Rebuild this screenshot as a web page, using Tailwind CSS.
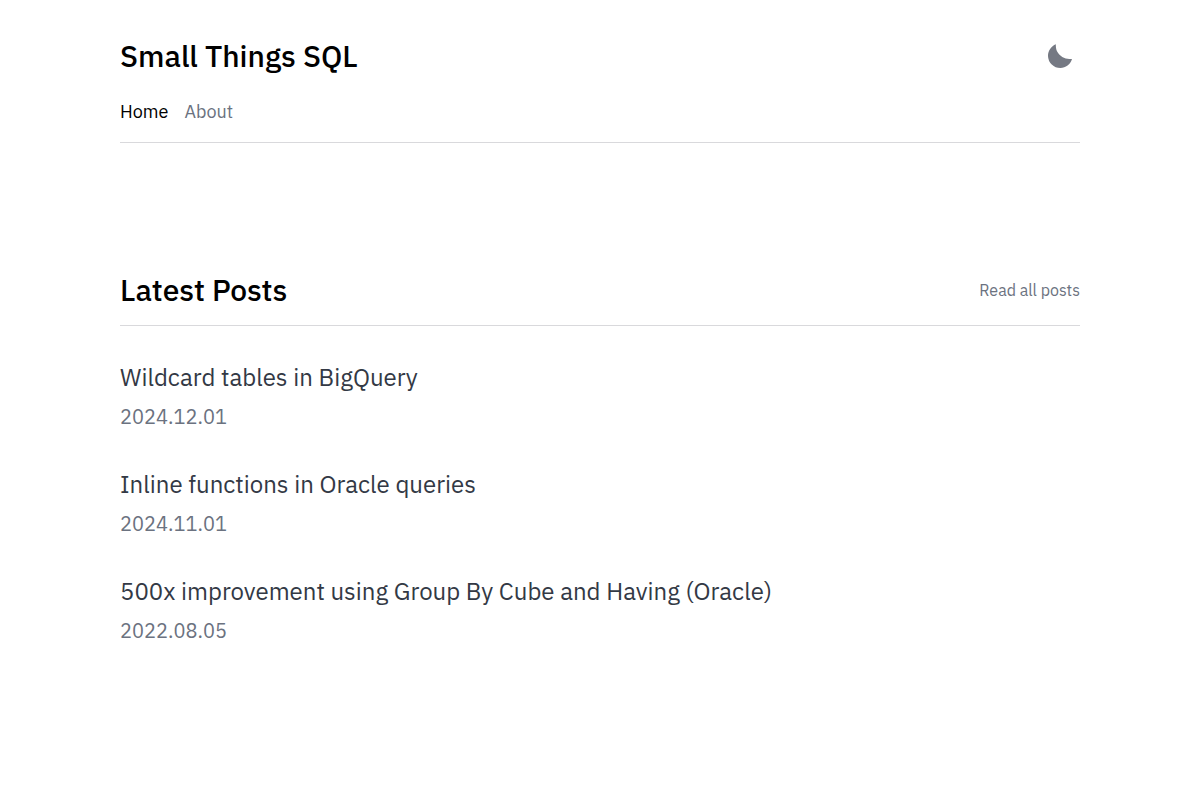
<!DOCTYPE html>
<html lang="en">
<head>
  <meta charset="UTF-8" />
  <meta name="viewport" content="width=device-width, initial-scale=1.0">
  <title>Small Things SQL</title>
  <script src="https://cdn.jsdelivr.net/npm/@tailwindcss/browser@4"></script>
</head>
<body class="bg-white text-black font-['IBM_Plex_Sans',Roboto,sans-serif]">

  <div class="max-w-5xl mx-auto px-8">

    <!-- Header -->
    <header class="border-b border-[#d9d9dc] pt-8 pb-3.5">
      <div class="flex items-center justify-between">
        <a href="#" class="text-3xl leading-12 font-medium">Small Things SQL</a>
        <button type="button" id="themeToggle" aria-label="Toggle dark mode" class="p-2 text-[#757983]">
          <svg class="w-6 h-6" viewBox="32 32 448 448" fill="currentColor">
            <path d="M264 480A232 232 0 0132 254C32 160 90 72 179 36C176 72 179 108 190 144C204 184 232 220 269 249C306 280 350 300 398 308C426 313 453 314 480 312C450 412 362 480 264 480z" />
          </svg>
        </button>
      </div>
      <nav class="flex gap-4 mt-4 text-lg leading-8">
        <a href="#" class="text-black">Home</a>
        <a href="#about" class="text-[#6b7280] hover:text-black">About</a>
      </nav>
    </header>

    <!-- Latest posts -->
    <main class="pt-32">
      <div class="flex items-center justify-between border-b border-[#d9d9dc] pb-4">
        <h1 class="text-3xl leading-[38px] font-medium">Latest Posts</h1>
        <a href="#posts" class="text-[#6b7280] hover:text-black">Read all posts</a>
      </div>

      <ul id="posts" class="pt-8 flex flex-col gap-[27px]">
        <li>
          <a href="#" class="block text-2xl leading-[38px] text-[#333945]">Wildcard tables in BigQuery</a>
          <time datetime="2024-12-01" class="block text-xl leading-[42px] text-[#6b7280]">2024.12.01</time>
        </li>
        <li>
          <a href="#" class="block text-2xl leading-[38px] text-[#333945]">Inline functions in Oracle queries</a>
          <time datetime="2024-11-01" class="block text-xl leading-[42px] text-[#6b7280]">2024.11.01</time>
        </li>
        <li>
          <a href="#" class="block text-2xl leading-[38px] text-[#333945]">500x improvement using Group By Cube and Having (Oracle)</a>
          <time datetime="2022-08-05" class="block text-xl leading-[42px] text-[#6b7280]">2022.08.05</time>
        </li>
      </ul>
    </main>

  </div>

</body>
</html>
